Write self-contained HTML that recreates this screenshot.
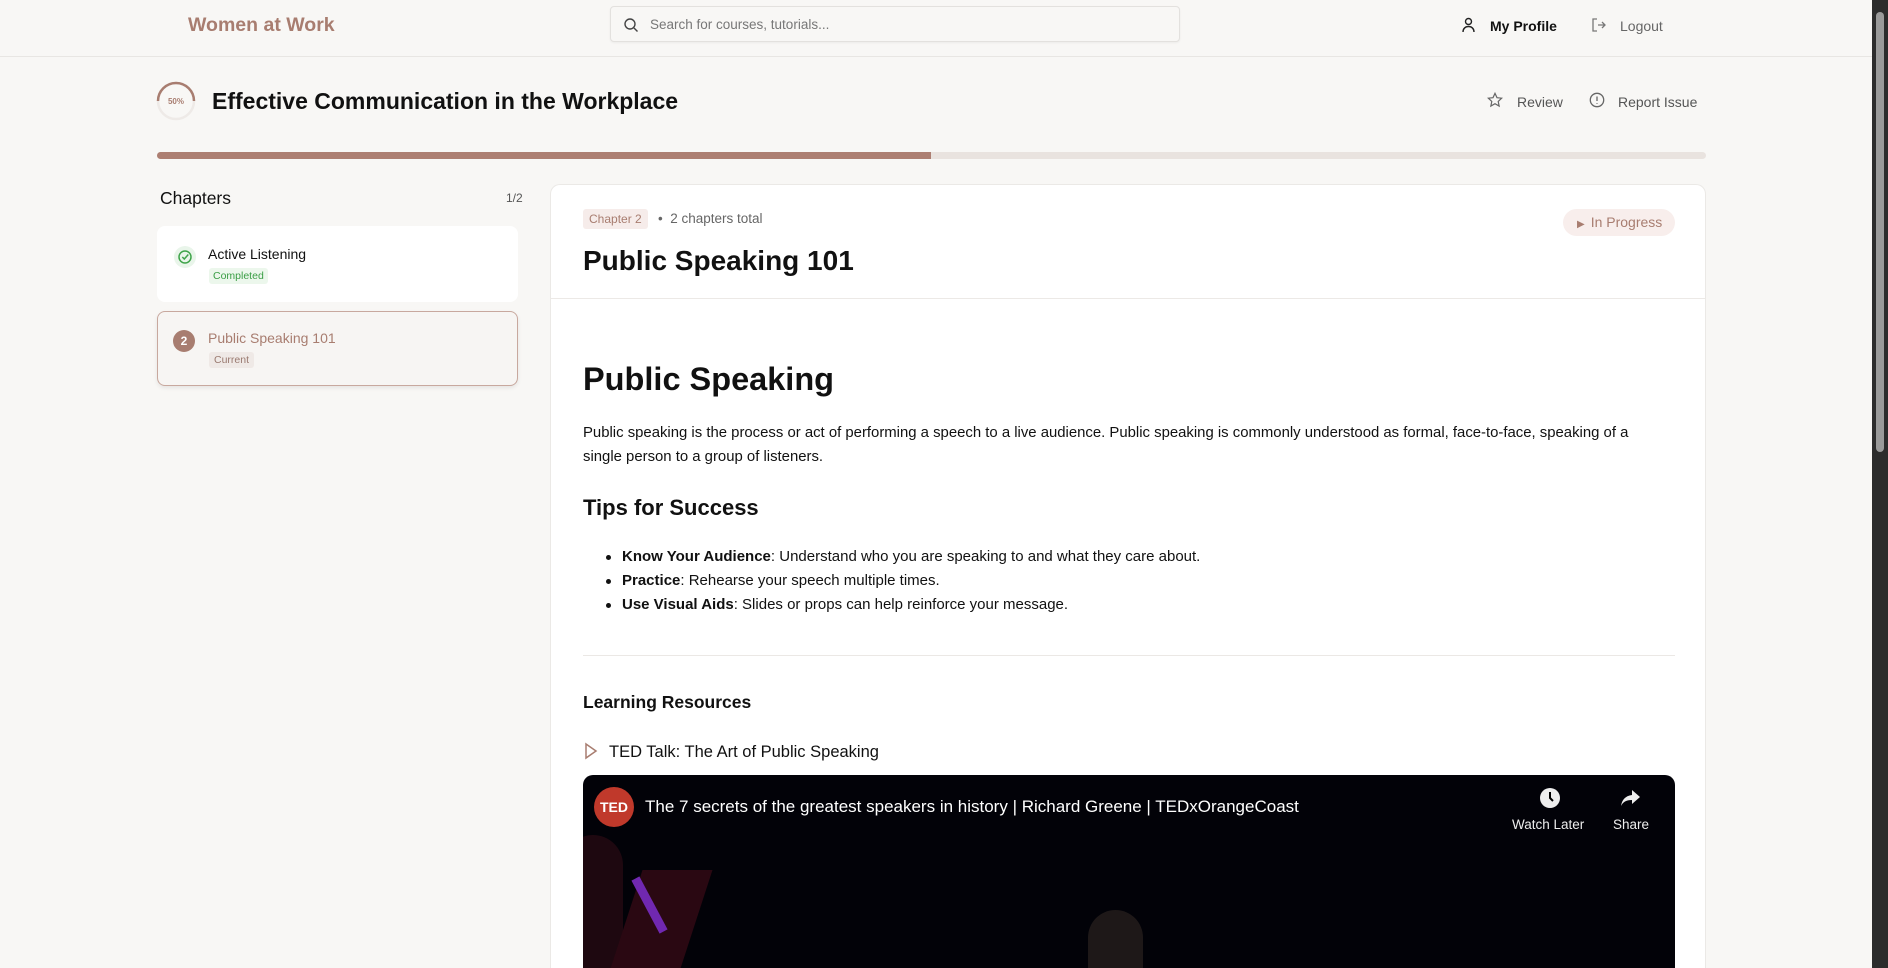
<!DOCTYPE html>
<html style="overflow:hidden;height:968px"><head><meta charset="utf-8"><style>
*{box-sizing:border-box;margin:0;padding:0}
body{width:1888px;height:968px;overflow:hidden;background:#f8f7f5;font-family:"Liberation Sans",sans-serif;color:#111;position:relative}
.abs{position:absolute}
.hdr{left:0;top:0;width:1872px;height:57px;border-bottom:1px solid #e8e6e3;background:#f8f7f5}
.logo{left:188px;top:14px;font-size:19.5px;font-weight:bold;color:#a87d70}
.search{left:610px;top:6px;width:570px;height:36px;border:1px solid #e3e1de;border-radius:4px;background:#f8f7f5;box-shadow:0 1px 2px rgba(0,0,0,.05)}
.search span{position:absolute;left:39px;top:10px;font-size:13.5px;color:#777}
.nav{font-size:14px;top:18px}
.sb{left:1872px;top:0;width:16px;height:968px;background:#2c2c2c}
.thumb{left:1876px;top:12px;width:8px;height:440px;background:#9a9a9a;border-radius:4px}
.title{left:212px;top:88px;font-size:23px;font-weight:bold}
.act{top:94px;font-size:14px;color:#555}
.bar{left:157px;top:152px;width:1549px;height:7px;border-radius:4px;background:#e9e3df;overflow:hidden}
.bar div{width:774px;height:7px;background:#ad7f72}
.card{border-radius:8px}
.main{left:550px;top:184px;width:1156px;height:784px;background:#fff;border:1px solid #ebe9e6;border-bottom:none;border-radius:10px 10px 0 0;overflow:hidden}
.c{position:absolute;left:32px}
ul{list-style:none}
li{position:relative;padding-left:39px;font-size:15px;line-height:24px}
li:before{content:"";position:absolute;left:23px;top:10px;width:5px;height:5px;border-radius:50%;background:#111}
</style></head><body>
<div class="abs hdr"></div>
<div class="abs logo">Women at Work</div>
<div class="abs search"><svg style="position:absolute;left:12px;top:10px" width="16" height="16" viewBox="0 0 16 16" fill="none" stroke="#444" stroke-width="1.4"><circle cx="7" cy="7" r="5"/><path d="M11 11l3.5 3.5"/></svg><span>Search for courses, tutorials...</span></div>
<svg class="abs" style="left:1461px;top:17px" width="15" height="16" viewBox="0 0 15 16" fill="none" stroke="#222" stroke-width="1.4"><circle cx="7.5" cy="4.5" r="3"/><path d="M2 15c0-3.5 2.5-5.5 5.5-5.5S13 11.5 13 15"/></svg>
<div class="abs nav" style="left:1490px;font-weight:bold;color:#111">My Profile</div>
<svg class="abs" style="left:1591px;top:17px" width="16" height="16" viewBox="0 0 16 16" fill="none" stroke="#777" stroke-width="1.3"><path d="M6 2H2v12h4M7 8h7M11 5l3 3-3 3"/></svg>
<div class="abs nav" style="left:1620px;color:#666">Logout</div>
<div class="abs sb"></div><div class="abs thumb"></div>

<svg class="abs" style="left:156px;top:81px" width="40" height="40" viewBox="0 0 40 40"><circle cx="20" cy="20" r="18" fill="none" stroke="#eeeae7" stroke-width="2.5"/><path d="M2 20A18 18 0 0 1 38 20" fill="none" stroke="#a87d70" stroke-width="2.5"/><text x="20" y="23" text-anchor="middle" font-size="8" font-weight="bold" fill="#a87d70" font-family="Liberation Sans">50%</text></svg>
<div class="abs title">Effective Communication in the Workplace</div>
<svg class="abs" style="left:1487px;top:92px" width="16" height="16" viewBox="0 0 24 24" fill="none" stroke="#666" stroke-width="1.8"><path d="M12 2l3 6.5 7 .8-5.2 4.8 1.4 7L12 17.6 5.8 21.1l1.4-7L2 9.3l7-.8z"/></svg>
<div class="abs act" style="left:1517px">Review</div>
<svg class="abs" style="left:1589px;top:92px" width="16" height="16" viewBox="0 0 16 16" fill="none" stroke="#666" stroke-width="1.3"><circle cx="8" cy="8" r="6.7"/><path d="M8 4.5v4.5M8 11v.8"/></svg>
<div class="abs act" style="left:1618px">Report Issue</div>
<div class="abs bar"><div></div></div>

<div class="abs" style="left:160px;top:188px;font-size:17.5px">Chapters</div>
<div class="abs" style="left:506px;top:191px;font-size:12px;color:#555">1/2</div>
<div class="abs card" style="left:157px;top:226px;width:361px;height:76px;background:#fff"></div>
<svg class="abs" style="left:174px;top:246px" width="22" height="22" viewBox="0 0 22 22"><circle cx="11" cy="11" r="11" fill="#e9f5ea"/><circle cx="11" cy="11" r="6" fill="none" stroke="#3fa44a" stroke-width="1.5"/><path d="M8.3 11l2 2 4-4.5" fill="none" stroke="#3fa44a" stroke-width="1.5"/></svg>
<div class="abs" style="left:208px;top:246px;font-size:14px">Active Listening</div>
<div class="abs" style="left:209px;top:268px;padding:2px 4px;font-size:10.5px;color:#3a9e45;background:#ecf7ec;border-radius:3px">Completed</div>
<div class="abs card" style="left:157px;top:311px;width:361px;height:75px;background:#f7f5f3;border:1px solid #c8a89e;box-shadow:0 2px 4px rgba(0,0,0,.08)"></div>
<div class="abs" style="left:173px;top:330px;width:22px;height:22px;border-radius:50%;background:#a87d70;color:#fff;font-size:12px;font-weight:bold;text-align:center;line-height:22px">2</div>
<div class="abs" style="left:208px;top:330px;font-size:14px;color:#a87d70">Public Speaking 101</div>
<div class="abs" style="left:209px;top:352px;padding:2px 5px;font-size:10.5px;color:#9a7a70;background:#efe9e6;border-radius:3px">Current</div>

<div class="abs main">
<div class="c" style="top:24px;padding:3px 6px;background:#f6ecea;color:#a87d70;font-size:12px;border-radius:3px">Chapter 2</div>
<div class="c" style="left:107px;top:26px;font-size:13.5px;color:#666">•&nbsp; 2 chapters total</div>
<div class="abs" style="left:1012px;top:24px;width:112px;height:27px;border-radius:14px;background:#f8eeec;color:#a87d70;font-size:14px;line-height:27px;padding-left:14px"><span style="font-size:10px;margin-right:6px">&#9654;</span>In Progress</div>
<div class="c" style="top:60px;font-size:28px;font-weight:bold">Public Speaking 101</div>
<div class="abs" style="left:0;top:113px;width:1154px;height:1px;background:#ece9e6"></div>
<div class="c" style="top:176px;font-size:32.5px;font-weight:bold">Public Speaking</div>
<div class="c" style="top:236px;width:1070px;font-size:14.9px;line-height:24px">Public speaking is the process or act of performing a speech to a live audience. Public speaking is commonly understood as formal, face-to-face, speaking of a single person to a group of listeners.</div>
<div class="c" style="top:310px;font-size:22px;font-weight:bold">Tips for Success</div>
<ul class="c" style="top:360px;left:32px">
<li><b>Know Your Audience</b>: Understand who you are speaking to and what they care about.</li>
<li><b>Practice</b>: Rehearse your speech multiple times.</li>
<li><b>Use Visual Aids</b>: Slides or props can help reinforce your message.</li>
</ul>
<div class="abs" style="left:32px;top:470px;width:1092px;height:1px;background:#ebe8e5"></div>
<div class="c" style="top:507px;font-size:17.5px;font-weight:bold">Learning Resources</div>
<svg class="abs" style="left:33px;top:557px" width="14" height="18" viewBox="0 0 14 18"><path d="M2 2l10 7-10 7z" fill="none" stroke="#a87d70" stroke-width="1.5"/></svg>
<div class="c" style="left:58px;top:558px;font-size:16.5px">TED Talk: The Art of Public Speaking</div>
<div class="abs" style="left:32px;top:590px;width:1092px;height:200px;background:#020208;border-radius:10px 10px 0 0;overflow:hidden">
<div class="abs" style="left:-20px;top:60px;width:60px;height:200px;background:#1e0810;border-radius:30px"></div>
<div class="abs" style="left:40px;top:95px;width:70px;height:120px;background:#2a0812;transform:skewX(-18deg)"></div>
<div class="abs" style="left:62px;top:100px;width:9px;height:60px;background:#7028b0;transform:rotate(-28deg)"></div>
<div class="abs" style="left:505px;top:135px;width:55px;height:100px;background:#1e1818;border-radius:28px"></div>
<div class="abs" style="left:11px;top:12px;width:40px;height:40px;border-radius:50%;background:#c0392b;color:#fff;font-weight:bold;font-size:14px;text-align:center;line-height:40px">TED</div>
<div class="abs" style="left:62px;top:22px;color:#fff;font-size:17px">The 7 secrets of the greatest speakers in history | Richard Greene | TEDxOrangeCoast</div>
<svg class="abs" style="left:956px;top:12px" width="22" height="22" viewBox="0 0 22 22"><circle cx="11" cy="11" r="10" fill="#eee"/><path d="M11 5v6l3 3" fill="none" stroke="#000" stroke-width="2"/></svg>
<div class="abs" style="left:929px;top:42px;color:#eee;font-size:13.5px">Watch Later</div>
<svg class="abs" style="left:1036px;top:12px" width="22" height="22" viewBox="0 0 22 22"><path d="M13 3l8 7-8 7v-4C7 13 4 15 2 19c1-6 4-10 11-11z" fill="#eee"/></svg>
<div class="abs" style="left:1030px;top:42px;color:#eee;font-size:13.5px">Share</div>
</div>
</div>
</body></html>
